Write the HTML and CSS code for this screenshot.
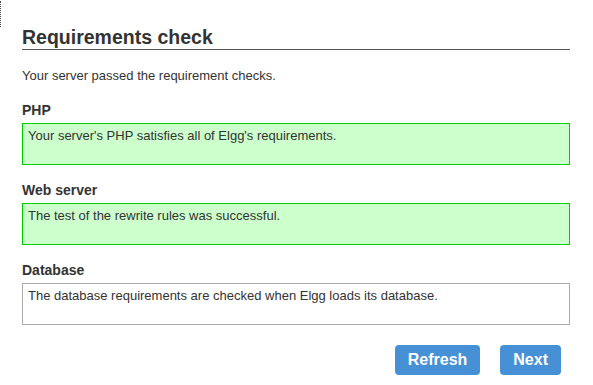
FILE: index.html
```html
<!DOCTYPE html>
<html>
<head>
<meta charset="utf-8">
<link rel="stylesheet" href="styles.css">
</head>
<body>
<div class="marker"></div>
<div class="page">
  <h2 class="title">Requirements check</h2>
  <p class="intro">Your server passed the requirement checks.</p>
  <h3 class="section">PHP</h3>
  <div class="msg msg-pass">Your server's PHP satisfies all of Elgg's requirements.</div>
  <h3 class="section">Web server</h3>
  <div class="msg msg-pass">The test of the rewrite rules was successful.</div>
  <h3 class="section">Database</h3>
  <div class="msg msg-info">The database requirements are checked when Elgg loads its database.</div>
  <div class="actions">
    <button class="btn">Refresh</button>
    <button class="btn">Next</button>
  </div>
</div>
</body>
</html>
```
FILE: styles.css
```css
html, body {
  margin: 0;
  padding: 0;
  background: #fff;
}
body {
  font-family: "Liberation Sans", Arial, sans-serif;
  color: #333;
  position: relative;
}
.marker {
  position: absolute;
  left: 0;
  top: 1px;
  width: 0;
  height: 26px;
  border-left: 1px dotted #444;
}
.page {
  padding: 25px 23px 0 22px;
}
.title {
  margin: 0;
  font-size: 19.5px;
  line-height: 24px;
  font-weight: bold;
  color: #333;
  border-bottom: 1px solid #555;
}
.intro {
  margin: 18px 0 0;
  font-size: 13px;
  line-height: 16px;
}
.section {
  margin: 17px 0 4px;
  font-size: 14px;
  line-height: 18px;
  font-weight: bold;
}
.msg {
  box-sizing: border-box;
  height: 42px;
  padding: 4px 5px;
  font-size: 13px;
  line-height: 16px;
  border: 1px solid #aaa;
  background: #fff;
}
.msg-pass {
  background: #ccffcc;
  border-color: #00cc00;
}
.msg + .section {
  margin-top: 16px;
}
.actions {
  display: flex;
  justify-content: flex-end;
  gap: 20px;
  margin-top: 20px;
  padding-right: 9px;
}
.btn {
  font-family: "Liberation Sans", Arial, sans-serif;
  font-size: 16px;
  font-weight: bold;
  color: #fff;
  background: #4690d6;
  border: none;
  border-radius: 4px;
  height: 30px;
  padding: 0 13px;
  line-height: 30px;
}
```
